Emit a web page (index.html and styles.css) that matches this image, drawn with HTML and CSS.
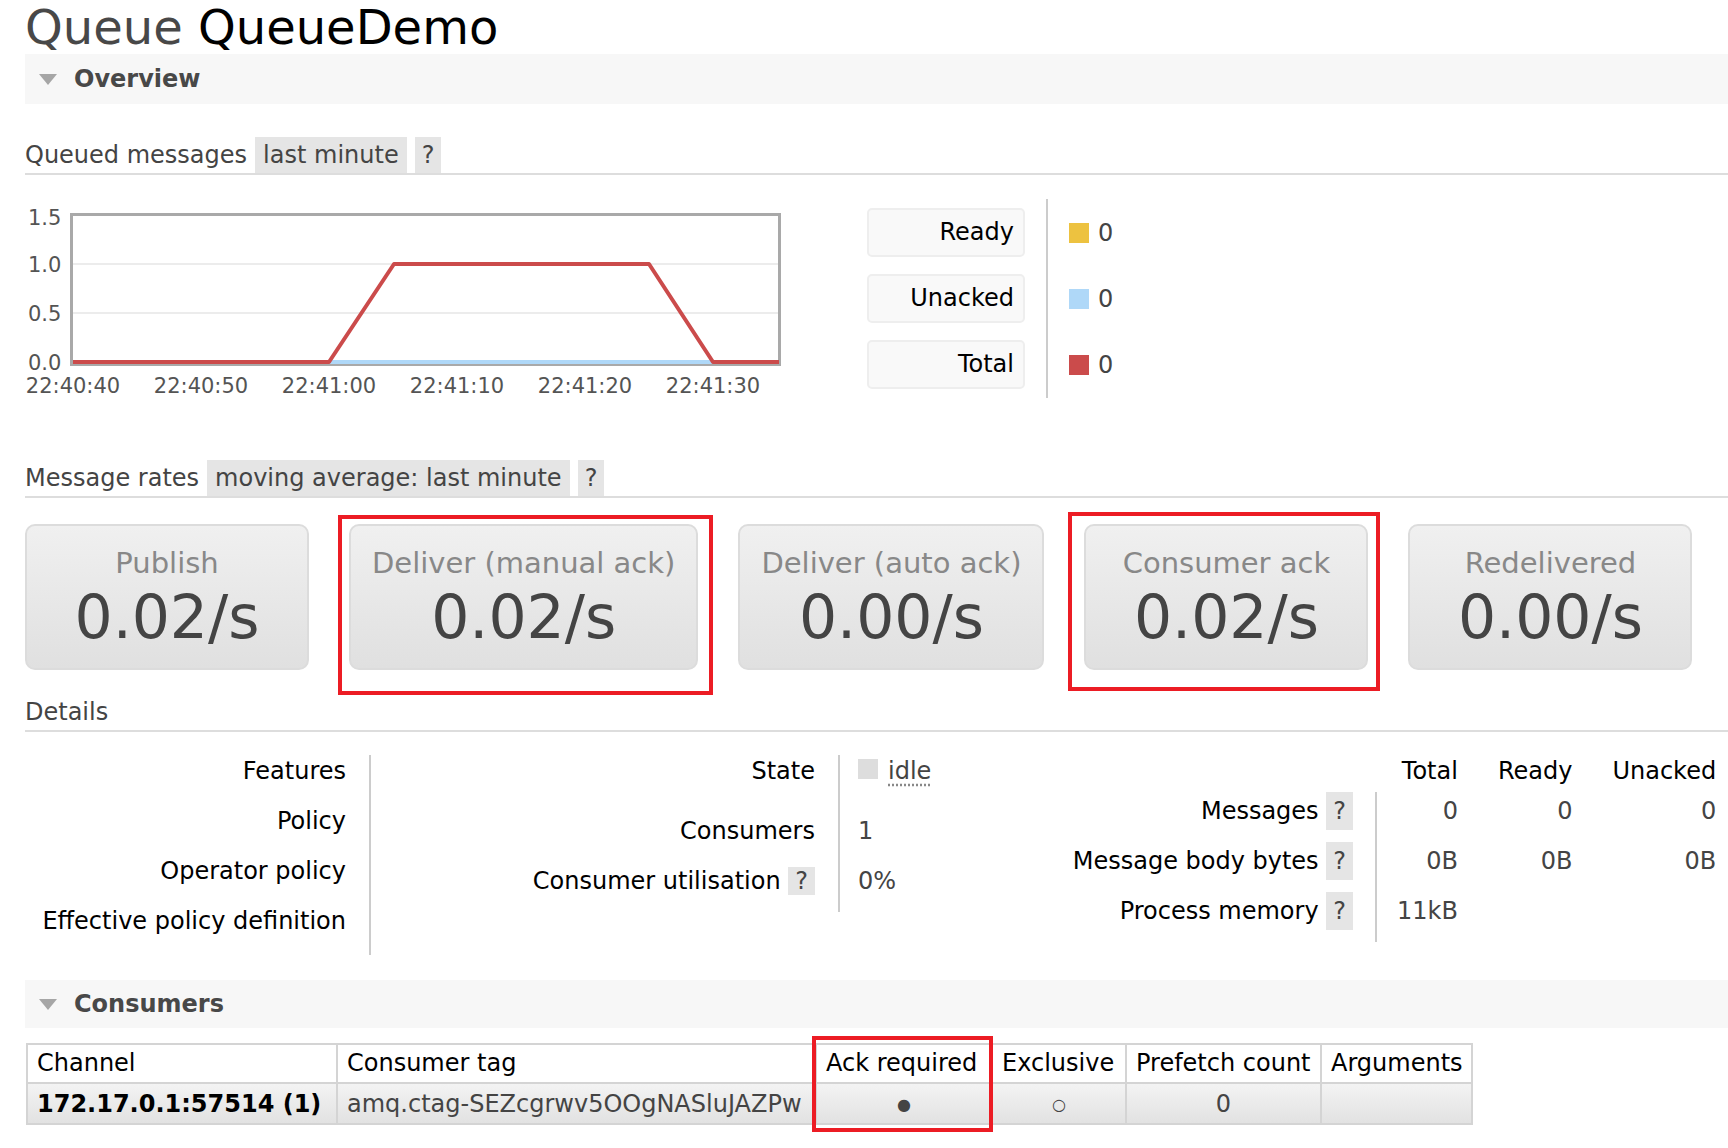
FILE: index.html
```html
<!DOCTYPE html>
<html>
<head>
<meta charset="utf-8">
<title>Queue QueueDemo</title>
<link rel="stylesheet" href="styles.css">
</head>
<body>
<div class="page">
  <h1><span class="pre">Queue</span> QueueDemo</h1>

  <div class="section-head"><span class="tri"></span>Overview</div>

  <h3 class="sub"><span>Queued messages</span><span class="pill">last minute</span><span class="q">?</span></h3>

  <div class="chart-row">
    <svg class="chart" width="770" height="210" viewBox="0 0 770 210">
      <line x1="48" y1="69" x2="754" y2="69" stroke="#ececec" stroke-width="2"/>
      <line x1="48" y1="118" x2="754" y2="118" stroke="#ececec" stroke-width="2"/>
      <rect x="46.5" y="19.5" width="708" height="150" fill="none" stroke="#a9a9a9" stroke-width="3"/>
      <polyline points="48,167 754,167" fill="none" stroke="#edc240" stroke-width="4"/>
      <polyline points="48,167 754,167" fill="none" stroke="#afd8f8" stroke-width="4"/>
      <polyline points="48,167 304,167 369,69 624,69 688,167 754,167" fill="none" stroke="#cb4b4b" stroke-width="4" stroke-linejoin="round"/>
      <g class="ticks">
        <text x="3" y="29.6">1.5</text>
        <text x="3" y="76.6">1.0</text>
        <text x="3" y="125.6">0.5</text>
        <text x="3" y="174.6">0.0</text>
        <text x="48" y="197.6" text-anchor="middle">22:40:40</text>
        <text x="176" y="197.6" text-anchor="middle">22:40:50</text>
        <text x="304" y="197.6" text-anchor="middle">22:41:00</text>
        <text x="432" y="197.6" text-anchor="middle">22:41:10</text>
        <text x="560" y="197.6" text-anchor="middle">22:41:20</text>
        <text x="688" y="197.6" text-anchor="middle">22:41:30</text>
      </g>
    </svg>
    <div class="legend">
      <div class="legend-labels">
        <div class="legend-box">Ready</div>
        <div class="legend-box">Unacked</div>
        <div class="legend-box">Total</div>
      </div>
      <div class="legend-values">
        <div class="legend-val"><span class="swatch sw-ready"></span>0</div>
        <div class="legend-val"><span class="swatch sw-unacked"></span>0</div>
        <div class="legend-val"><span class="swatch sw-total"></span>0</div>
      </div>
    </div>
  </div>

  <h3 class="sub rates-head"><span>Message rates</span><span class="pill">moving average: last minute</span><span class="q">?</span></h3>

  <div class="rates">
    <div class="rate"><div class="rate-label">Publish</div><div class="rate-value">0.02/s</div></div>
    <div class="rate"><div class="rate-label">Deliver (manual ack)</div><div class="rate-value">0.02/s</div></div>
    <div class="rate"><div class="rate-label">Deliver (auto ack)</div><div class="rate-value">0.00/s</div></div>
    <div class="rate"><div class="rate-label">Consumer ack</div><div class="rate-value">0.02/s</div></div>
    <div class="rate"><div class="rate-label">Redelivered</div><div class="rate-value">0.00/s</div></div>
  </div>

  <h3 class="sub details-head"><span>Details</span></h3>

  <div class="details">
    <table class="facts t1">
      <tr><th>Features</th><td></td></tr>
      <tr><th>Policy</th><td></td></tr>
      <tr><th>Operator policy</th><td></td></tr>
      <tr><th>Effective policy definition</th><td></td></tr>
    </table>
    <table class="facts t2">
      <tr class="r-state"><th>State</th><td><span class="status"></span><abbr class="idle">idle</abbr></td></tr>
      <tr class="r-cons"><th>Consumers</th><td>1</td></tr>
      <tr class="r-util"><th>Consumer utilisation <span class="q">?</span></th><td>0%</td></tr>
    </table>
    <table class="facts t3">
      <tr class="hdr"><th class="corner"></th><th>Total</th><th>Ready</th><th>Unacked</th></tr>
      <tr><th>Messages <span class="q">?</span></th><td class="first">0</td><td>0</td><td>0</td></tr>
      <tr><th>Message body bytes <span class="q">?</span></th><td class="first">0B</td><td>0B</td><td>0B</td></tr>
      <tr><th>Process memory <span class="q">?</span></th><td class="first">11kB</td><td></td><td></td></tr>
    </table>
  </div>

  <div class="section-head consumers-head"><span class="tri"></span>Consumers</div>

  <table class="list">
    <colgroup>
      <col class="w-channel"><col class="w-tag"><col class="w-ack"><col class="w-excl"><col class="w-pref"><col class="w-args">
    </colgroup>
    <tr><th>Channel</th><th>Consumer tag</th><th>Ack required</th><th>Exclusive</th><th>Prefetch count</th><th>Arguments</th></tr>
    <tr><td class="b">172.17.0.1:57514 (1)</td><td>amq.ctag-SEZcgrwv5OOgNASluJAZPw</td><td class="c"><span class="dot">●</span></td><td class="c"><span class="dot">○</span></td><td class="c">0</td><td></td></tr>
  </table>

  <div class="mark m1"></div>
  <div class="mark m2"></div>
  <div class="mark m3"></div>
</div>
</body>
</html>
```

FILE: styles.css
```css
html, body {
  margin: 0;
  padding: 0;
  background: #fff;
}

body {
  font-family: "DejaVu Sans", Verdana, sans-serif;
  font-size: 24px;
  line-height: 28px;
  color: #000;
  width: 1728px;
  height: 1148px;
  overflow: hidden;
}

.page {
  position: relative;
  padding-left: 25px;
  height: 1148px;
}

h1 {
  margin: 3px 0 0;
  font-size: 48px;
  line-height: 48px;
  font-weight: normal;
  color: #000;
  white-space: nowrap;
}

h1 .pre {
  color: #484848;
}

.section-head {
  display: flex;
  align-items: center;
  height: 50px;
  margin-top: 3px;
  padding-left: 14px;
  background: #f7f7f7;
  font-weight: bold;
  color: #484848;
}

.tri {
  width: 0;
  height: 0;
  border-left: 9.5px solid transparent;
  border-right: 9.5px solid transparent;
  border-top: 11px solid #a6a6a6;
  margin-right: 17px;
}

.sub {
  display: flex;
  align-items: flex-end;
  gap: 8px;
  margin: 33px 0 0;
  font-size: 24px;
  font-weight: normal;
  line-height: 28px;
  color: #444;
  border-bottom: 2px solid #ddd;
}

.sub > span {
  padding: 4px 0;
}

.sub .pill {
  padding: 4px 8px;
  background: #e5e5e5;
}

.sub .q {
  padding: 4px 7px;
  background: #e5e5e5;
}

/* chart */
.chart-row {
  display: flex;
  align-items: flex-start;
  margin-top: 20px;
}

.chart {
  display: block;
  flex: none;
}

.ticks text {
  font-family: "DejaVu Sans", Verdana, sans-serif;
  font-size: 21px;
  fill: #545454;
}

.legend {
  display: flex;
  margin-top: 4px;
  margin-left: 72px;
}

.legend-labels {
  display: flex;
  flex-direction: column;
  gap: 17px;
  padding: 9px 21px 9px 0;
}

.legend-box {
  box-sizing: border-box;
  width: 158px;
  height: 49px;
  background: #f9f9f9;
  border: 2px solid #eeeeee;
  border-radius: 5px;
  text-align: right;
  padding-right: 9px;
  line-height: 45px;
  color: #000;
}

.legend-values {
  display: flex;
  flex-direction: column;
  gap: 17px;
  padding: 9px 0 9px 21px;
  border-left: 2px solid #ccc;
}

.legend-val {
  display: flex;
  align-items: center;
  height: 49px;
  color: #444;
}

.swatch {
  width: 20px;
  height: 20px;
  margin-right: 9px;
}

.sw-ready { background: #edc240; }
.sw-unacked { background: #afd8f8; }
.sw-total { background: #cb4b4b; }

.rates-head {
  margin-top: 55px;
}

/* rate boxes */
.rates {
  display: flex;
  gap: 40px;
  margin-top: 26px;
}

.rate {
  min-width: 238px;
  padding: 19px 21px;
  border: 2px solid #dcdcdc;
  border-radius: 10px;
  background: linear-gradient(#f0f0f0, #e0e0e0);
  text-align: center;
  white-space: nowrap;
}

.rate-label {
  font-size: 29px;
  line-height: 36px;
  color: #888;
}

.rate-value {
  margin-top: 4px;
  font-size: 60px;
  line-height: 64px;
  color: #444;
}

.details-head {
  margin-top: 24px;
}

/* details */
.details {
  display: flex;
  align-items: flex-start;
  margin-top: 23px;
}

.facts {
  flex: none;
  border-collapse: separate;
  border-spacing: 0;
}

.facts th {
  font-weight: normal;
  text-align: right;
  white-space: nowrap;
  color: #000;
  vertical-align: top;
  padding: 2px 23px 20px 0;
}

.facts td {
  vertical-align: top;
  padding: 2px 20px 20px 18px;
  border-left: 2px solid #ccc;
  color: #444;
  white-space: nowrap;
}

.facts .q {
  display: inline-block;
  padding: 0 7px;
  background: #e5e5e5;
  color: #444;
}

.t1 th { width: 321px; }
.t1 td { width: 60px; }

.t2 th { width: 346px; }
.t2 td { width: 150px; }

.t2 .r-state th, .t2 .r-state td { padding-bottom: 30px; }
.t2 .r-cons th, .t2 .r-cons td { padding-bottom: 20px; }
.t2 .r-util th, .t2 .r-util td { padding-bottom: 17px; }

.status {
  display: inline-block;
  width: 20px;
  height: 20px;
  background: #ddd;
  margin-right: 10px;
}

.idle {
  text-decoration: underline dotted #888;
  text-underline-offset: 5px;
  color: #444;
}

.t3 th, .t3 td {
  vertical-align: baseline;
}

.t3 th {
  width: 325px;
  padding: 0 22px 12px 0;
}

.t3 td {
  border-left: none;
  width: auto;
  padding: 0 20px 12px;
  text-align: right;
}

.t3 td.first {
  border-left: 2px solid #ccc;
}

.t3 .q {
  padding: 5px 7px;
}

.t3 .hdr th {
  width: auto;
  padding: 2px 20px 7px;
}

.t3 .hdr th.corner {
  width: 325px;
  padding: 0 22px 0 0;
}

/* consumers */
.consumers-head {
  margin-top: 25px;
  height: 48px;
}

.list {
  margin: 15px 0 0 1px;
  border-collapse: collapse;
  table-layout: fixed;
  width: 1445px;
}

.w-channel { width: 310px; }
.w-tag { width: 479px; }
.w-ack { width: 176px; }
.w-excl { width: 134px; }
.w-pref { width: 195px; }
.w-args { width: 151px; }

.list th {
  text-align: left;
  font-weight: normal;
  color: #000;
  padding: 4px 9px 5px;
  border: 2px solid #d4d4d4;
  background: #fff;
  white-space: nowrap;
  overflow: hidden;
}

.list td {
  padding: 4px 9px;
  border: 2px solid #d4d4d4;
  background: linear-gradient(#f3f3f3, #e2e2e2);
  color: #444;
  white-space: nowrap;
  overflow: hidden;
}

.list td.c { text-align: center; }
.list td.b { font-weight: bold; color: #000; }

.dot {
  font-size: 16px;
}

/* annotation boxes */
.mark {
  position: absolute;
  box-sizing: border-box;
  border: 4px solid #ec1c24;
}

.m1 { left: 338px; top: 512px; width: 375px; height: 180px; }
.m2 { left: 1068px; top: 509px; width: 312px; height: 179px; }
.m3 { left: 812px; top: 1033px; width: 181px; height: 96px; }
```
